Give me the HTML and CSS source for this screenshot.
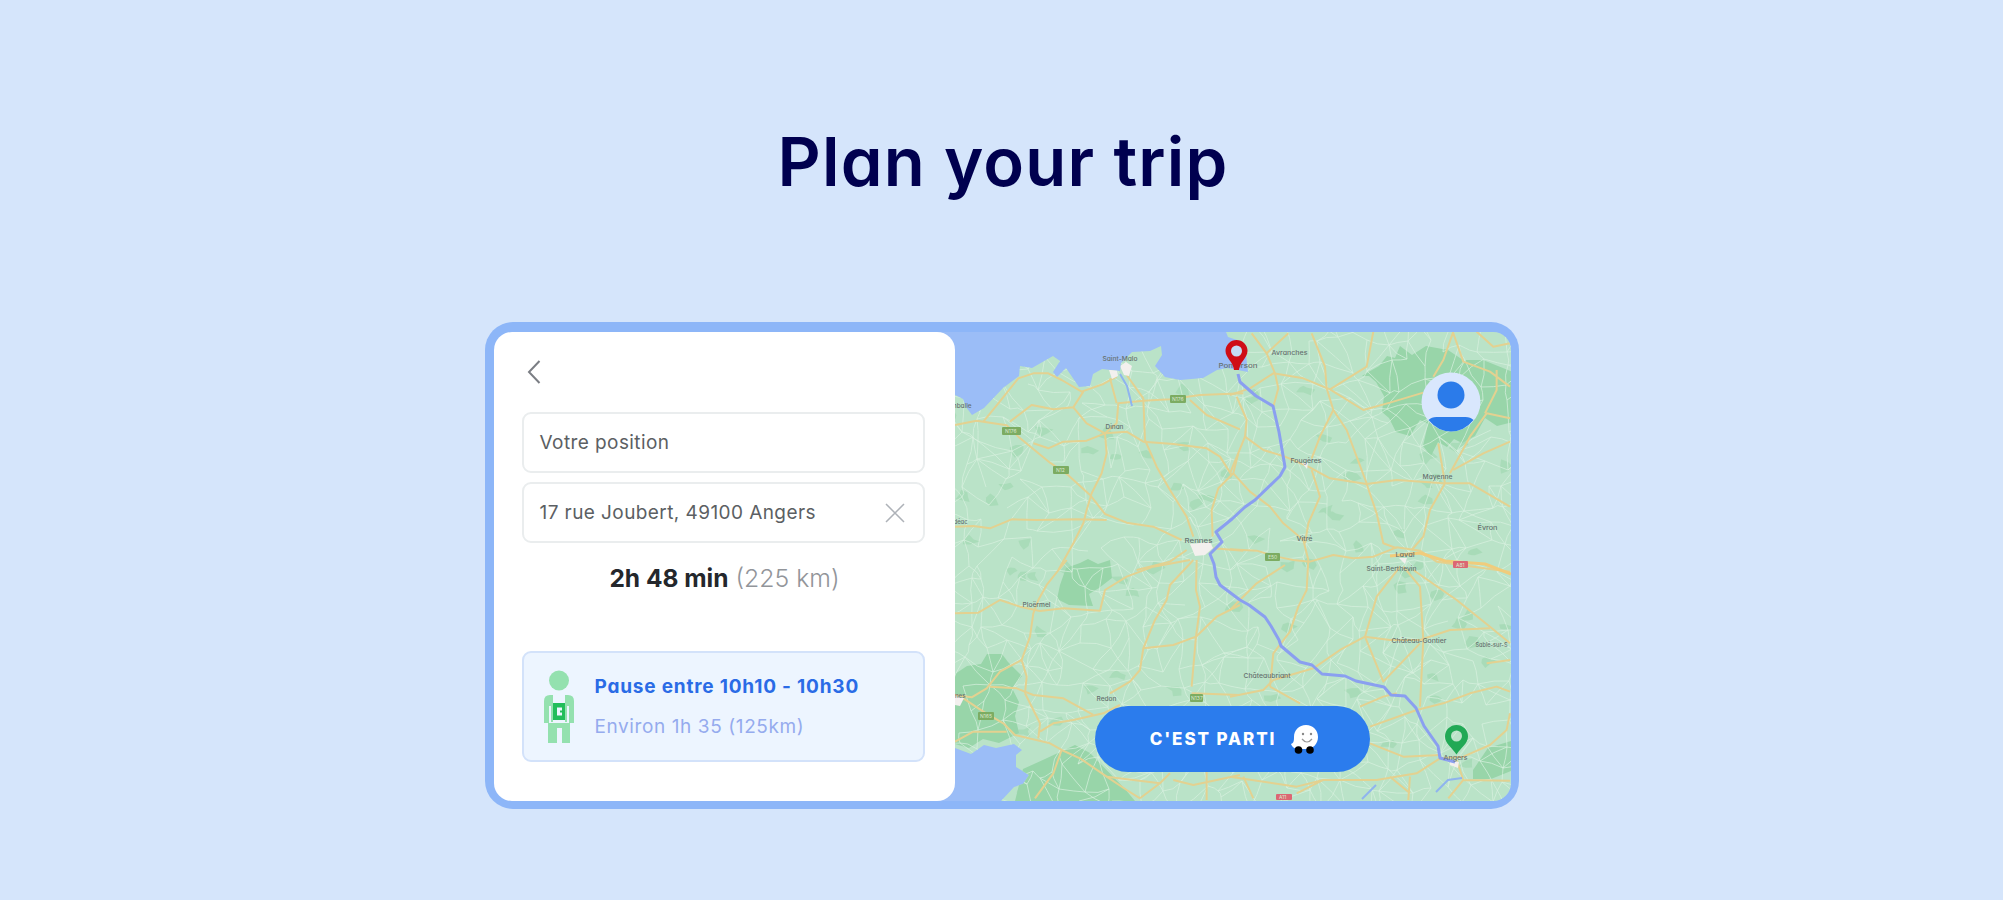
FILE: index.html
```html
<!DOCTYPE html>
<html lang="en">

<head>
    <meta charset="UTF-8">
    <meta name="viewport" content="width=device-width, initial-scale=1.0">
    <title>Plan your trip</title>
    <link rel="stylesheet" href="styles.css">
</head>

<body>
    <h1 class="title">Plan your trip</h1>

    <div class="planner">
        <div class="panel">
            <a class="back">
                <svg width="16" height="26" viewBox="0 0 16 26"><path d="M13.500 2 3 13l10.500 11" /></svg>
            </a>
            <div class="field"><span class="position">Votre position</span></div>
            <div class="field">
                <span class="address">17 rue Joubert, 49100 Angers</span>
                <svg class="clear" width="20" height="20" viewBox="0 0 20 20"><path d="M1 1l18 18M19 1 1 19" /></svg>
            </div>
            <p class="duration"><b>2h 48 min</b><span>(225 km)</span></p>
            <div class="break">
                <svg class="person" width="32" height="74" viewBox="0 0 32 74">
                    <circle cx="16" cy="10.500" r="10" />
                    <path d="M10 25H7q-6 0-6 6v22h5V36h2v16h2zM22 25h3q6 0 6 6v22h-5V36h-2v16h-2z" />
                    <path d="M5 53h22v20h-8V58h-5v15H5z" />
                    <path class="person-bag" fill-rule="evenodd" d="M10 33h12v17H10zM14 37.500v8h5v-3h-2v-2h2v-3z" />
                </svg>
                <div class="break-text">
                    <b>Pause entre 10h10 - 10h30</b>
                    <span>Environ 1h 35 (125km)</span>
                </div>
            </div>
        </div>

        <div class="map">
            <svg class="map-canvas" width="581" height="469" viewBox="930 332 581 469">
                <defs>
                    <clipPath id="land">
                        <path d="M955 395L963 399 966 407 972 415 984 408 1003 388 1019 376 1020 366 1032 368 1053 356 1060 361 1053 372 1057 377 1066 368 1079 387 1090 386 1093 374 1102 369 1120 371 1121 363 1132 352 1150 351 1161 346 1162 355 1155 366 1165 377 1180 380 1203 378 1217 370 1227 368 1248 372 1246 355 1237 340 1228 337 1226 332H1511V801H1001L1014 787 1023 784 1029 775 1016 767 1016 755 1022 750 1014 744 996 748 984 745 971 754 955 748 930 740V400z" />
                    </clipPath>
                </defs>
                <rect class="sea" x="930" y="332" width="581" height="469" />
                <g clip-path="url(#land)">
                    <rect class="land" x="930" y="332" width="581" height="469" />
                    <g id="fields"></g>
                    <g class="forest">
                        <path d="M1365 374l14-8 8-10 8 2 5-12 12 9 14-9 22 4 15 10 20 0 30 12v50l-16 4-12-8-10 18-13 7-8-4-7 8-9-5-7 14-8-10 5-22-8-4-10 16-14-4-7-14-7-6 2-16-8-14-7-6-7 0z" />
                        <path d="M1060 585l6-17 14-5 8-4 10 5 12-4 2 18-13 10-10 6 4 12-24-1-12-6z" />
                        <path d="M955 674l12-8 14-2 6-10 15 0 6 8 14 14-10 12 7 14-4 14 4 17-20 10-16-4-14 9-14-4z" />
                        <path d="M1023 769l22-10 30-14 15 8 35 36 10 12h-120z" />
                        <path d="M1473 770l15-22 23-7v30l-20 8-18 0z" />
                    </g>
                    <g id="streets"></g>

                    <!-- north west -->
                    <g class="roads" transform="translate(940 310) scale(.3333)">
                        <path d="M45 345L110 332 200 346 235 380 330 458 384 495 450 555 495 612 560 638 640 650 725 690" />
                        <path d="M130 335L175 280 235 205 280 190 325 190 365 210 425 245 490 222 530 200" />
                        <path d="M210 335L275 285 340 298 400 292 430 245M400 292L440 340 495 370" />
                        <path d="M280 400L325 415 370 395 440 392 495 370 560 365 610 395 700 402 800 415 840 440 875 495" />
                        <path d="M495 370L500 430 485 490 455 550 440 600 430 640 400 700 355 780" />
                        <path d="M495 370L530 340 535 280 610 272 690 268 780 255 910 250" />
                        <path d="M530 280L510 205M560 195L610 265 615 390 650 470 690 540 740 620 760 680" />
                        <path d="M750 270L800 315 900 358M895 430L880 490 835 535 815 600 818 680" />
                        <path d="M45 650L100 648 150 655 215 628 290 630 410 628 500 630M820 715L910 722M740 720L690 755 590 780" />
                    </g>
                    <!-- north east -->
                    <g class="roads" transform="translate(1230 310) scale(.3333)">
                        <path d="M0 255L60 235 130 190 220 205 300 238 400 300 480 278 580 248" />
                        <path d="M65 70L110 130 135 190 145 235 130 290M110 130L175 70M245 70L285 170 290 235 310 300 350 360 410 520" />
                        <path d="M430 65L410 170 300 238M310 300L270 380 245 445" />
                        <path d="M20 260L50 330 45 380 100 420 165 440 235 470 300 505 410 522 500 510 640 520 720 520 840 590" />
                        <path d="M45 380L0 490M10 490L60 545 120 590 160 640 220 690 235 750" />
                        <path d="M245 480L270 560 235 640 225 700M410 522L440 610 460 700 500 715" />
                        <path d="M645 520L600 600 580 680 545 720M645 520L625 400M660 490L720 380 770 310 840 325" />
                        <path d="M670 65L640 150 610 200M670 70L700 155 780 185 840 230M740 65L790 110 840 100M670 480L760 430 840 395M800 180L800 240 765 310" />
                        <path d="M0 718L80 722 140 740 190 750 240 755 310 735 370 745 430 740 500 712 570 722 620 755 840 785" />
                    </g>
                    <!-- south west -->
                    <g class="roads" transform="translate(940 560) scale(.3333)">
                        <path d="M45 160L115 158 180 120 240 140 300 153 370 145 480 152 495 90 560 50 640 20 750 0" />
                        <path d="M380 0L320 75 295 120 280 160 270 230 245 300 260 350 255 400" />
                        <path d="M245 300L180 335 140 385 95 412 45 405M150 380L230 385 280 405 370 415 460 465" />
                        <path d="M70 415L130 455 190 490 225 525 330 550 365 570 420 595 500 650 560 690 600 715" />
                        <path d="M255 400L300 490 295 535M300 515L340 490 400 480 490 460 540 435" />
                        <path d="M365 570L340 640 285 715M760 0L690 75 680 120 645 180 610 265 600 330 570 365 510 400" />
                        <path d="M770 0L768 90 780 140 768 230 755 380M610 265L700 255 768 230 830 170 900 135" />
                        <path d="M755 400L900 405M500 650L660 670 690 640M600 715L660 670M800 635V720M700 660L760 675 900 645M45 545L100 515 200 515" />
                    </g>
                    <!-- south east -->
                    <g class="roads" transform="translate(1230 560) scale(.3333)">
                        <path d="M235 0L230 90 205 140 180 215 130 280 120 380" />
                        <path d="M0 150L80 70 165 15M510 20L440 110 405 230 330 270 250 325 130 360 100 390 0 410" />
                        <path d="M520 20L570 80 580 240 570 440M550 30L680 120 780 200 840 250" />
                        <path d="M405 230L480 240 570 240 660 210 780 205M405 230L460 365 570 250M120 380L210 430" />
                        <path d="M390 440L460 410 500 400M420 500L560 450 640 430 720 400 800 380 840 395M420 550L520 590 630 585" />
                        <path d="M0 650L200 680 280 660 440 660 560 640 630 595 700 590 780 555 830 510 840 460M200 700L280 660M480 650L540 700M540 650L535 720" />
                        <path d="M680 600L700 660 655 715M700 660L840 662M40 650L70 715M770 310L840 300" />
                    </g>
                    <path class="river" d="M1120 374l7 12 5 20M1362 799l14-14M1436 792l12-12 14-2" />
                    <g class="town">
                        <path d="M1120 366l6-4 6 4-3 10-5-1zM1109 370l8 0 1 6-6 3z" />
                        <path d="M1190 544l20-2 3 6-8 7-10 1zM1302 463l6 0-1 6zM1399 558l8 0-2 6zM1450 760l9 2-1 6-8-3z" />
                        <path d="M955 696l9 2-4 8-5-1z" />
                    </g>
                    <g class="motorway">
                        <path d="M1390 556l30-3 25 8 40 3 26 10" />
                    </g>
                </g>

                <path class="route" d="M1238 374L1240 382 1256 396 1273 406 1279 432 1285 467 1280 476 1255 500 1245 507 1232 519 1216 532 1222 542 1210 554 1214 564 1216 577 1220 585 1240 600 1249 605 1265 617 1271 626 1279 640 1281 646 1300 662 1312 665 1322 674 1345 676 1356 681 1384 687 1391 695 1405 696 1416 708 1424 726 1438 746 1440 758 1455 762" />

                <g class="labels" transform="translate(.5 2)">
                    <text x="1102" y="359" textLength="35" lengthAdjust="spacingAndGlyphs">Saint-Malo</text>
                    <text x="1105" y="427" textLength="18" lengthAdjust="spacingAndGlyphs">Dinan</text>
                    <text x="1184" y="541" textLength="28" lengthAdjust="spacingAndGlyphs">Rennes</text>
                    <text x="1218" y="366" textLength="39" lengthAdjust="spacingAndGlyphs">Pontorson</text>
                    <text x="1271" y="353" textLength="36" lengthAdjust="spacingAndGlyphs">Avranches</text>
                    <text x="1290" y="461" textLength="31" lengthAdjust="spacingAndGlyphs">Fougères</text>
                    <text x="1422" y="477" textLength="30" lengthAdjust="spacingAndGlyphs">Mayenne</text>
                    <text x="1296" y="539" textLength="16" lengthAdjust="spacingAndGlyphs">Vitré</text>
                    <text x="1395" y="555" textLength="19" lengthAdjust="spacingAndGlyphs">Laval</text>
                    <text x="1366" y="569" textLength="50" lengthAdjust="spacingAndGlyphs">Saint-Berthevin</text>
                    <text x="1477" y="528" textLength="20" lengthAdjust="spacingAndGlyphs">Évron</text>
                    <text x="1022" y="605" textLength="28" lengthAdjust="spacingAndGlyphs">Ploërmel</text>
                    <text x="1096" y="699" textLength="20" lengthAdjust="spacingAndGlyphs">Redon</text>
                    <text x="1243" y="676" textLength="47" lengthAdjust="spacingAndGlyphs">Châteaubriant</text>
                    <text x="1391" y="641" textLength="55" lengthAdjust="spacingAndGlyphs">Château-Gontier</text>
                    <text x="1475" y="645" textLength="32" lengthAdjust="spacingAndGlyphs">Sablé-sur-S</text>
                    <text x="1443" y="758" textLength="24" lengthAdjust="spacingAndGlyphs">Angers</text>
                    <text x="943" y="406" textLength="28" lengthAdjust="spacingAndGlyphs">Lamballe</text>
                    <text x="943" y="522" textLength="24" lengthAdjust="spacingAndGlyphs">Loudéac</text>
                    <text x="943" y="696" textLength="22" lengthAdjust="spacingAndGlyphs">Vannes</text>
                </g>
                <g class="shields">
                    <rect x="1002" y="427" width="19" height="8" rx="1" />
                    <rect x="1053" y="466" width="16" height="8" rx="1" />
                    <rect x="1170" y="395" width="16" height="8" rx="1" />
                    <rect x="1265" y="553" width="15" height="8" rx="1" />
                    <rect x="978" y="712" width="16" height="8" rx="1" />
                    <rect x="1190" y="694" width="13" height="8" rx="1" />
                    <rect class="red" x="1453" y="561" width="15" height="7" rx="1" />
                    <rect class="red" x="1276" y="794" width="16" height="6" rx="1" />
                </g>
                <g class="shield-text">
                    <text x="1005" y="433">N176</text>
                    <text x="1056" y="472">N12</text>
                    <text x="1172" y="401">N176</text>
                    <text x="1268" y="559">E50</text>
                    <text x="980" y="718">N165</text>
                    <text x="1191" y="700">N137</text>
                    <text x="1456" y="567">A81</text>
                    <text x="1279" y="799">A11</text>
                </g>

                <circle class="pin-hole" cx="1236.500" cy="351" r="7" />
                <path class="pin-start" fill-rule="evenodd" d="M1236.500 340a11 11 0 0 1 11 11c0 7-8 11-8.500 19h-5c-.5-8-8.500-12-8.500-19a11 11 0 0 1 11-11zm0 5.500a5.500 5.500 0 1 0 0 11 5.500 5.500 0 0 0 0-11z" />
                <path class="pin-end" fill-rule="evenodd" d="M1456.500 725a11.500 11.500 0 0 1 11.500 11.500c0 7-7 11-11.500 18-4.500-7-11.500-11-11.500-18a11.500 11.500 0 0 1 11.500-11.500zm0 5.500a5.500 5.500 0 1 0 0 11 5.500 5.500 0 0 0 0-11z" />
            </svg>

            <svg class="avatar" width="60" height="60" viewBox="0 0 60 60">
                <circle class="avatar-bg" cx="30" cy="30" r="29.500" />
                <circle cx="30" cy="23" r="13.500" />
                <path d="M7.500 48q3-3 8-3h29q5 0 8 3Q43 59.500 30 59.500T7.500 48z" />
            </svg>

            <a class="go">
                <span>C'EST PARTI</span>
                <svg width="29" height="30" viewBox="0 0 29 30">
                    <path class="waze" d="M1 20c3-1 3-4 3-7C4 6 9 1 16 1s12 5 12 12-5 12-12 12H9c-4 0-7-2-8-5z" />
                    <circle cx="8.500" cy="26" r="3.800" />
                    <circle cx="20" cy="26" r="3.800" />
                    <circle class="eye" cx="13" cy="10" r="1.200" />
                    <circle class="eye" cx="21" cy="10" r="1.200" />
                    <path class="smile" d="M12 15q5 6 10 0" />
                </svg>
            </a>
        </div>
    </div>

    <script>
        const svgns = 'http://www.w3.org/2000/svg';
        let seed = 7;

        const rand = () => {
            seed = (seed * 16807) % 2147483647;
            return seed / 2147483647;
        };

        const addPath = (parent, d) => {
            const path = document.createElementNS(svgns, 'path');
            path.setAttribute('d', d);
            document.getElementById(parent).appendChild(path);
        };

        // small roads: jittered grid, each point joined to some of its neighbours
        const step = 20;
        const cols = 31;
        const rows = 26;
        const points = [];
        for (let r = 0; r < rows; r++) {
            for (let c = 0; c < cols; c++) {
                points.push([
                    Math.round(925 + c * step + (rand() - 0.5) * 17),
                    Math.round(325 + r * step + (rand() - 0.5) * 17)
                ]);
            }
        }
        let d = '';
        points.forEach((p, i) => {
            [i + 1, i + cols, i + cols + 1, i + cols - 1].forEach((n, k) => {
                const q = points[n];
                if (!q || Math.abs(q[0] - p[0]) > 60 || rand() > (k < 2 ? 0.7 : 0.35)) return;
                const mx = (p[0] + q[0]) / 2 + (rand() - 0.5) * 4;
                const my = (p[1] + q[1]) / 2 + (rand() - 0.5) * 4;
                d += `M${p[0]} ${p[1]}L${mx.toFixed(1)} ${my.toFixed(1)} ${q[0]} ${q[1]}`;
            });
        });
        addPath('streets', d);

        // little woods
        for (let i = 0; i < 75; i++) {
            const x = 950 + rand() * 560;
            const y = 370 + rand() * 425;
            let blob = '';
            for (let a = 0; a < 7; a++) {
                const radius = 3 + rand() * 8;
                blob += `${a ? 'L' : 'M'}${(x + Math.cos(a * 0.9) * radius).toFixed(1)} ${(y + Math.sin(a * 0.9) * radius * 0.7).toFixed(1)}`;
            }
            addPath('fields', blob + 'z');
        }
    </script>
</body>

</html>
```

FILE: styles.css
```css
* {
    box-sizing: border-box;
}

body {
    margin: 0;
    height: 900px;
    overflow: hidden;
    background: #d5e5fb;
    font-family: Inter, "Liberation Sans", sans-serif;
    font-feature-settings: "cv11";
}

.title {
    margin: 0;
    padding: 122px 0 0 3px;
    height: 322px;
    text-align: center;
    font-size: 67px;
    line-height: 80px;
    font-weight: 600;
    letter-spacing: 1.200px;
    color: #00004f;
}

.planner {
    width: 1034px;
    height: 487px;
    margin: 0 auto;
    padding: 10px 8px 8px 9px;
    display: flex;
    border-radius: 28px;
    background: #8db6f8;
}

.panel {
    width: 461px;
    height: 469px;
    padding: 27px 30px 0 28px;
    position: relative;
    z-index: 1;
    flex: none;
    border-radius: 18px;
    background: #fff;
}

.back {
    display: block;
    height: 53px;
    padding-left: 4px;
}

.back path {
    fill: none;
    stroke: #7b7e84;
    stroke-width: 2;
}

.field {
    height: 61px;
    margin-bottom: 9px;
    padding: 0 18px 0 16px;
    display: flex;
    align-items: center;
    justify-content: space-between;
    border: 2px solid #eaedee;
    border-radius: 9px;
    font-size: 19px;
    letter-spacing: .42px;
    color: #5c5f63;
}

.clear path {
    fill: none;
    stroke: #aeb2b8;
    stroke-width: 1.5;
}

.duration {
    margin: 0;
    height: 99px;
    padding: 11px 0 0 3px;
    display: flex;
    justify-content: center;
    gap: 7px;
    font-size: 25px;
    line-height: 30px;
}

.duration b {
    font-size: 24.500px;
    color: #24272c;
}

.duration span {
    font-size: 24.800px;
    font-weight: 300;
    color: #92959a;
}

.break {
    height: 111px;
    padding: 0 20px 0 19px;
    display: flex;
    align-items: center;
    gap: 20px;
    border: 2px solid #d3e2fa;
    border-radius: 9px;
    background: #edf5ff;
}

.person {
    fill: #94e1af;
}

.person-bag {
    fill: #22bd5b;
}

.break-text {
    display: flex;
    flex-direction: column;
    gap: 16px;
    font-size: 19px;
    line-height: 24px;
    white-space: nowrap;
}

.break-text b {
    letter-spacing: .8px;
    color: #2a6be6;
}

.break-text span {
    letter-spacing: .6px;
    color: #95abee;
}

.map {
    width: 581px;
    height: 469px;
    margin-left: -25px;
    position: relative;
    flex: none;
    overflow: hidden;
    border-radius: 0 18px 18px 0;
}

.map-canvas {
    display: block;
}

.sea {
    fill: #9bbdf7;
}

.land {
    fill: #bae3c8;
}

#fields,
.forest {
    fill: #98d5a9;
}

#fields {
    opacity: .5;
}

#streets {
    fill: none;
    stroke: #d8f1e0;
    stroke-width: 1;
    opacity: .7;
}

.roads,
.motorway {
    fill: none;
    stroke: #e3d190;
    stroke-width: 6;
    stroke-linejoin: round;
}

.motorway {
    stroke: #f0cc7c;
    stroke-width: 3;
}

.river {
    fill: none;
    stroke: #8fb4ee;
    stroke-width: 2;
}

.town {
    fill: #f3f0ee;
}

.route {
    fill: none;
    stroke: #8a9ff0;
    stroke-width: 3;
    stroke-linejoin: round;
}

.labels {
    font-size: 6.500px;
    font-weight: 500;
    fill: #66716f;
}

.shields {
    fill: #7cac62;
}

.shields .red {
    fill: #dc6673;
}

.shield-text {
    font-size: 5px;
    fill: #d9ead0;
}

.pin-hole {
    fill: #c5dcf5;
}

.pin-start {
    fill: #cf0d16;
}

.pin-end {
    fill: #21a955;
}

.avatar {
    position: absolute;
    top: 40px;
    right: 30px;
    fill: #2b7bea;
}

.avatar-bg {
    fill: #d9e7fd;
}

.go {
    width: 275px;
    height: 66px;
    position: absolute;
    left: 165px;
    bottom: 29px;
    padding-left: 5px;
    display: flex;
    align-items: center;
    justify-content: center;
    gap: 14px;
    border-radius: 33px;
    background: #2b7ced;
    color: #fff;
    font-size: 17px;
    font-weight: 800;
    letter-spacing: 1.900px;
}

.waze {
    fill: #fff;
}

.eye {
    fill: #888;
}

.smile {
    fill: none;
    stroke: #999;
    stroke-width: 1.2;
}
```
